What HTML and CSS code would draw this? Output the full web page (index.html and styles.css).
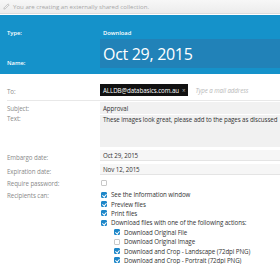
FILE: index.html
```html
<!DOCTYPE html>
<html>
<head>
<meta charset="utf-8">
<link rel="stylesheet" href="styles.css">
</head>
<body>
<div class="notice">
  <svg class="pencil" width="7" height="7" viewBox="0 0 8 8"><path d="M1 7 L1.3 5.5 L5.8 1 L7 2.2 L2.5 6.7 Z" fill="none" stroke="#b5b5b5" stroke-width="0.8"/></svg>
  <span>You are creating an externally shared collection.</span>
</div>
<div class="hero">
  <div class="hrow">
    <span class="hlabel">Type:</span>
    <span class="hval">Download</span>
  </div>
  <div class="hrow namerow">
    <span class="hlabel">Name:</span>
    <div class="namebox">Oct 29, 2015</div>
  </div>
</div>
<div class="form">
  <div class="row torow">
    <span class="label">To:</span>
    <div class="tokens"><span class="token">ALLDB@databasics.com.au <span class="x">×</span></span><span class="ph">Type a mail address</span></div>
  </div>
  <div class="row">
    <span class="label">Subject:</span>
    <div class="field">Approval</div>
  </div>
  <div class="row">
    <span class="label textlabel">Text:</span>
    <div class="field area">These images look great, please add to the pages as discussed</div>
  </div>
  <div class="row gaprow">
    <span class="label">Embargo date:</span>
    <div class="field date">Oct 29, 2015</div>
  </div>
  <div class="row daterow">
    <span class="label">Expiration date:</span>
    <div class="field date">Nov 12, 2015</div>
  </div>
  <div class="row cbrow">
    <span class="label">Require password:</span>
    <div class="checks"><div class="check"><span class="box"></span></div></div>
  </div>
  <div class="row cbrow">
    <span class="label">Recipients can:</span>
    <div class="checks">
      <div class="check"><span class="box on"></span>See the Information window</div>
      <div class="check"><span class="box on"></span>Preview files</div>
      <div class="check"><span class="box on"></span>Print files</div>
      <div class="check"><span class="box on"></span>Download files with one of the following actions:</div>
      <div class="check sub"><span class="box on"></span>Download Original File</div>
      <div class="check sub"><span class="box"></span>Download Original Image</div>
      <div class="check sub"><span class="box on"></span>Download and Crop - Landscape (72dpi PNG)</div>
      <div class="check sub"><span class="box on"></span>Download and Crop - Portrait (72dpi PNG)</div>
    </div>
  </div>
</div>
</body>
</html>
```
FILE: styles.css
```css
* { box-sizing: border-box; }
body {
  margin: 0;
  font-family: "Open Sans", "Noto Sans", sans-serif;
  background: #fff;
  overflow: hidden;
}
.notice {
  height: 14px;
  background: linear-gradient(#f7f7f7, #ececec);
  border-bottom: 1px solid #dcdcdc;
  display: flex;
  align-items: center;
  gap: 3px;
  padding-left: 3px;
  font-size: 6.1px;
  color: #a8a8a8;
  white-space: nowrap;
}
.hero {
  margin-top: 1px;
  background: #1592ca;
  padding: 14px 0 6px 7px;
  color: #fff;
}
.hrow {
  display: grid;
  grid-template-columns: 93px 1fr;
  align-items: center;
}
.hlabel { font-size: 5.8px; font-weight: 600; }
.hval { font-size: 5.8px; font-weight: 600; padding-left: 3px; }
.namerow { margin-top: 2px; align-items: end; }
.namerow .hlabel { padding-bottom: 1px; }
.namebox {
  background: #2182b8;
  height: 29px;
  display: flex;
  align-items: center;
  padding-left: 3px;
  font-size: 16px;
  letter-spacing: -0.3px;
}
.form {
  padding: 10px 0 0 7px;
  font-size: 6.2px;
  letter-spacing: -0.08px;
  color: #333;
}
.row {
  display: grid;
  grid-template-columns: 93px 1fr;
  align-items: start;
}
.label { color: #8a8a8a; padding-top: 3px; white-space: nowrap; }
.textlabel { padding-top: 0; }
.torow { border-bottom: 1px solid #e8e8e8; padding-bottom: 4px; }
.tokens { display: flex; align-items: center; gap: 7px; white-space: nowrap; }
.token {
  background: #111;
  color: #fff;
  height: 12px;
  display: flex;
  align-items: center;
  padding: 0 3px;
  gap: 3px;
}
.token .x { color: #aaa; }
.ph { font-style: italic; color: #b8b8b8; }
.field {
  background: #f1f1f1;
  height: 12px;
  margin-top: 1px;
  padding: 0 0 0 3px;
  display: flex;
  align-items: center;
  white-space: nowrap;
  overflow: hidden;
}
.area { height: 32px; align-items: flex-start; padding-top: 0; }
.gaprow { margin-top: 3px; }
.daterow { margin-top: 2px; }
.date { height: 11px; margin-top: 0; border-bottom: 1px solid #e4e4e4; background: #f6f6f6; }
.cbrow { margin-top: 2px; }
.cbrow .label { padding-top: 1px; }
.checks { display: flex; flex-direction: column; padding-left: 1px; }
.check {
  height: 9.4px;
  display: flex;
  align-items: center;
  gap: 4px;
  white-space: nowrap;
}
.check.sub { padding-left: 13px; }
.box {
  width: 6px;
  height: 6px;
  border: 1px solid #c8c8c8;
  border-radius: 1px;
  background: #fff;
  flex: none;
  position: relative;
}
.box.on {
  background: #1c86c8;
  border-color: #1c86c8;
}
.box.on::after {
  content: "";
  position: absolute;
  left: 1px;
  top: 0;
  width: 1.5px;
  height: 3px;
  border: solid #fff;
  border-width: 0 1px 1px 0;
  transform: rotate(40deg);
}
```
